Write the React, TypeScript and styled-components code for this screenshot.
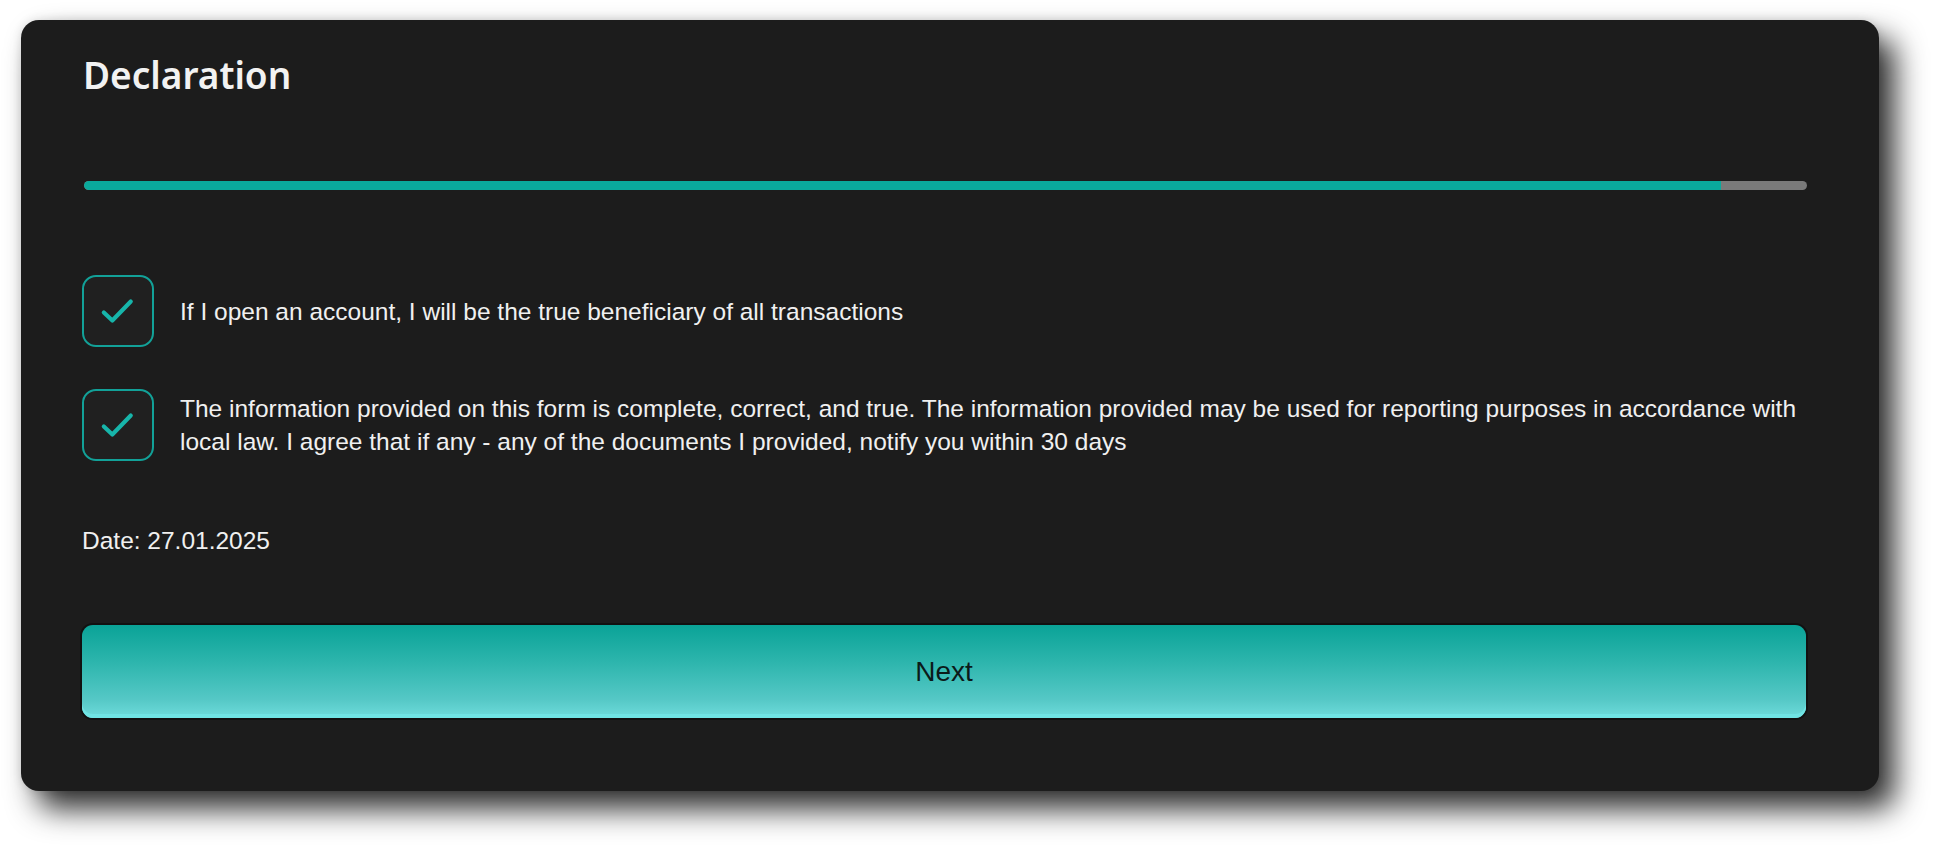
import React from "react";
import styled, { createGlobalStyle } from "styled-components";

const Global = createGlobalStyle`
  html, body { margin: 0; padding: 0; background: #ffffff; }
  body { width: 1939px; height: 852px; overflow: hidden; }
  * { box-sizing: border-box; }
`;

const Page = styled.div`
  padding: 20px 60px 0 21px;
`;

const Card = styled.section`
  width: 1858px;
  height: 771px;
  background: #1c1c1c;
  border-radius: 18px;
  box-shadow: 16px 18px 30px rgba(0, 0, 0, 0.82), 0 0 10px rgba(0, 0, 0, 0.12);
  padding: 32px 73px 0 61px;
  display: flex;
  flex-direction: column;
`;

const Title = styled.h1`
  margin: 0;
  font-family: "Noto Sans", "Open Sans", sans-serif;
  font-weight: 600;
  font-size: 37px;
  line-height: 46px;
  color: #f2f2f2;
  padding-left: 1px;
`;

const Track = styled.div`
  margin-top: 83px;
  height: 9px;
  border-radius: 5px;
  background: #7a7a7a;
  overflow: hidden;
  margin-left: 2px;
  margin-right: -1px;
`;

const Fill = styled.div`
  height: 100%;
  background: #0aaa9c;
  border-radius: 5px 0 0 5px;
`;

const Items = styled.div`
  margin-top: 85px;
  display: flex;
  flex-direction: column;
  gap: 42px;
`;

const Row = styled.label`
  display: flex;
  align-items: center;
  gap: 26px;
`;

const Box = styled.span`
  flex: 0 0 72px;
  width: 72px;
  height: 72px;
  border-radius: 14px;
  border: 2.5px solid #12a198;
  background: #202020;
  display: flex;
  align-items: center;
  justify-content: center;
`;

const Text = styled.p`
  margin: 0;
  font-family: "Liberation Sans", Arial, sans-serif;
  font-size: 24.5px;
  line-height: 33px;
  color: #f0f0f0;
`;

const DateLine = styled.p`
  margin: 65px 0 0 0;
  font-family: "Liberation Sans", Arial, sans-serif;
  font-size: 24.5px;
  line-height: 30px;
  color: #f0f0f0;
`;

const Next = styled.button`
  margin-top: 69px;
  height: 93px;
  width: 100%;
  border: none;
  border-radius: 11px;
  background: linear-gradient(180deg, #0aa397 0%, #2db5ad 40%, #55c8c6 80%, #6fdcdc 100%);
  box-shadow: 0 0 0 2px #111, inset 0 -4px 0 #70e4e4;
  font-family: "Liberation Sans", Arial, sans-serif;
  font-size: 28px;
  color: #0b1a19;
  cursor: pointer;
`;

const Check = () => (
  <svg width="72" height="72" viewBox="0 0 72 72" fill="none">
    <path d="M21 37.5 L30 46 L49.5 26" stroke="#17b5aa" strokeWidth="4.4" strokeLinecap="round" strokeLinejoin="round" />
  </svg>
);

export default function App() {
  const progress = 95;
  return (
    <>
      <Global />
      <Page>
        <Card>
          <Title>Declaration</Title>
          <Track>
            <Fill style={{ width: `${progress}%` }} />
          </Track>
          <Items>
            <Row>
              <Box><Check /></Box>
              <Text>If I open an account, I will be the true beneficiary of all transactions</Text>
            </Row>
            <Row>
              <Box><Check /></Box>
              <Text>
                The information provided on this form is complete, correct, and true. The information provided may be used for reporting purposes in accordance with local law. I agree that if any - any of the documents I provided, notify you within 30 days
              </Text>
            </Row>
          </Items>
          <DateLine>Date: 27.01.2025</DateLine>
          <Next>Next</Next>
        </Card>
      </Page>
    </>
  );
}
